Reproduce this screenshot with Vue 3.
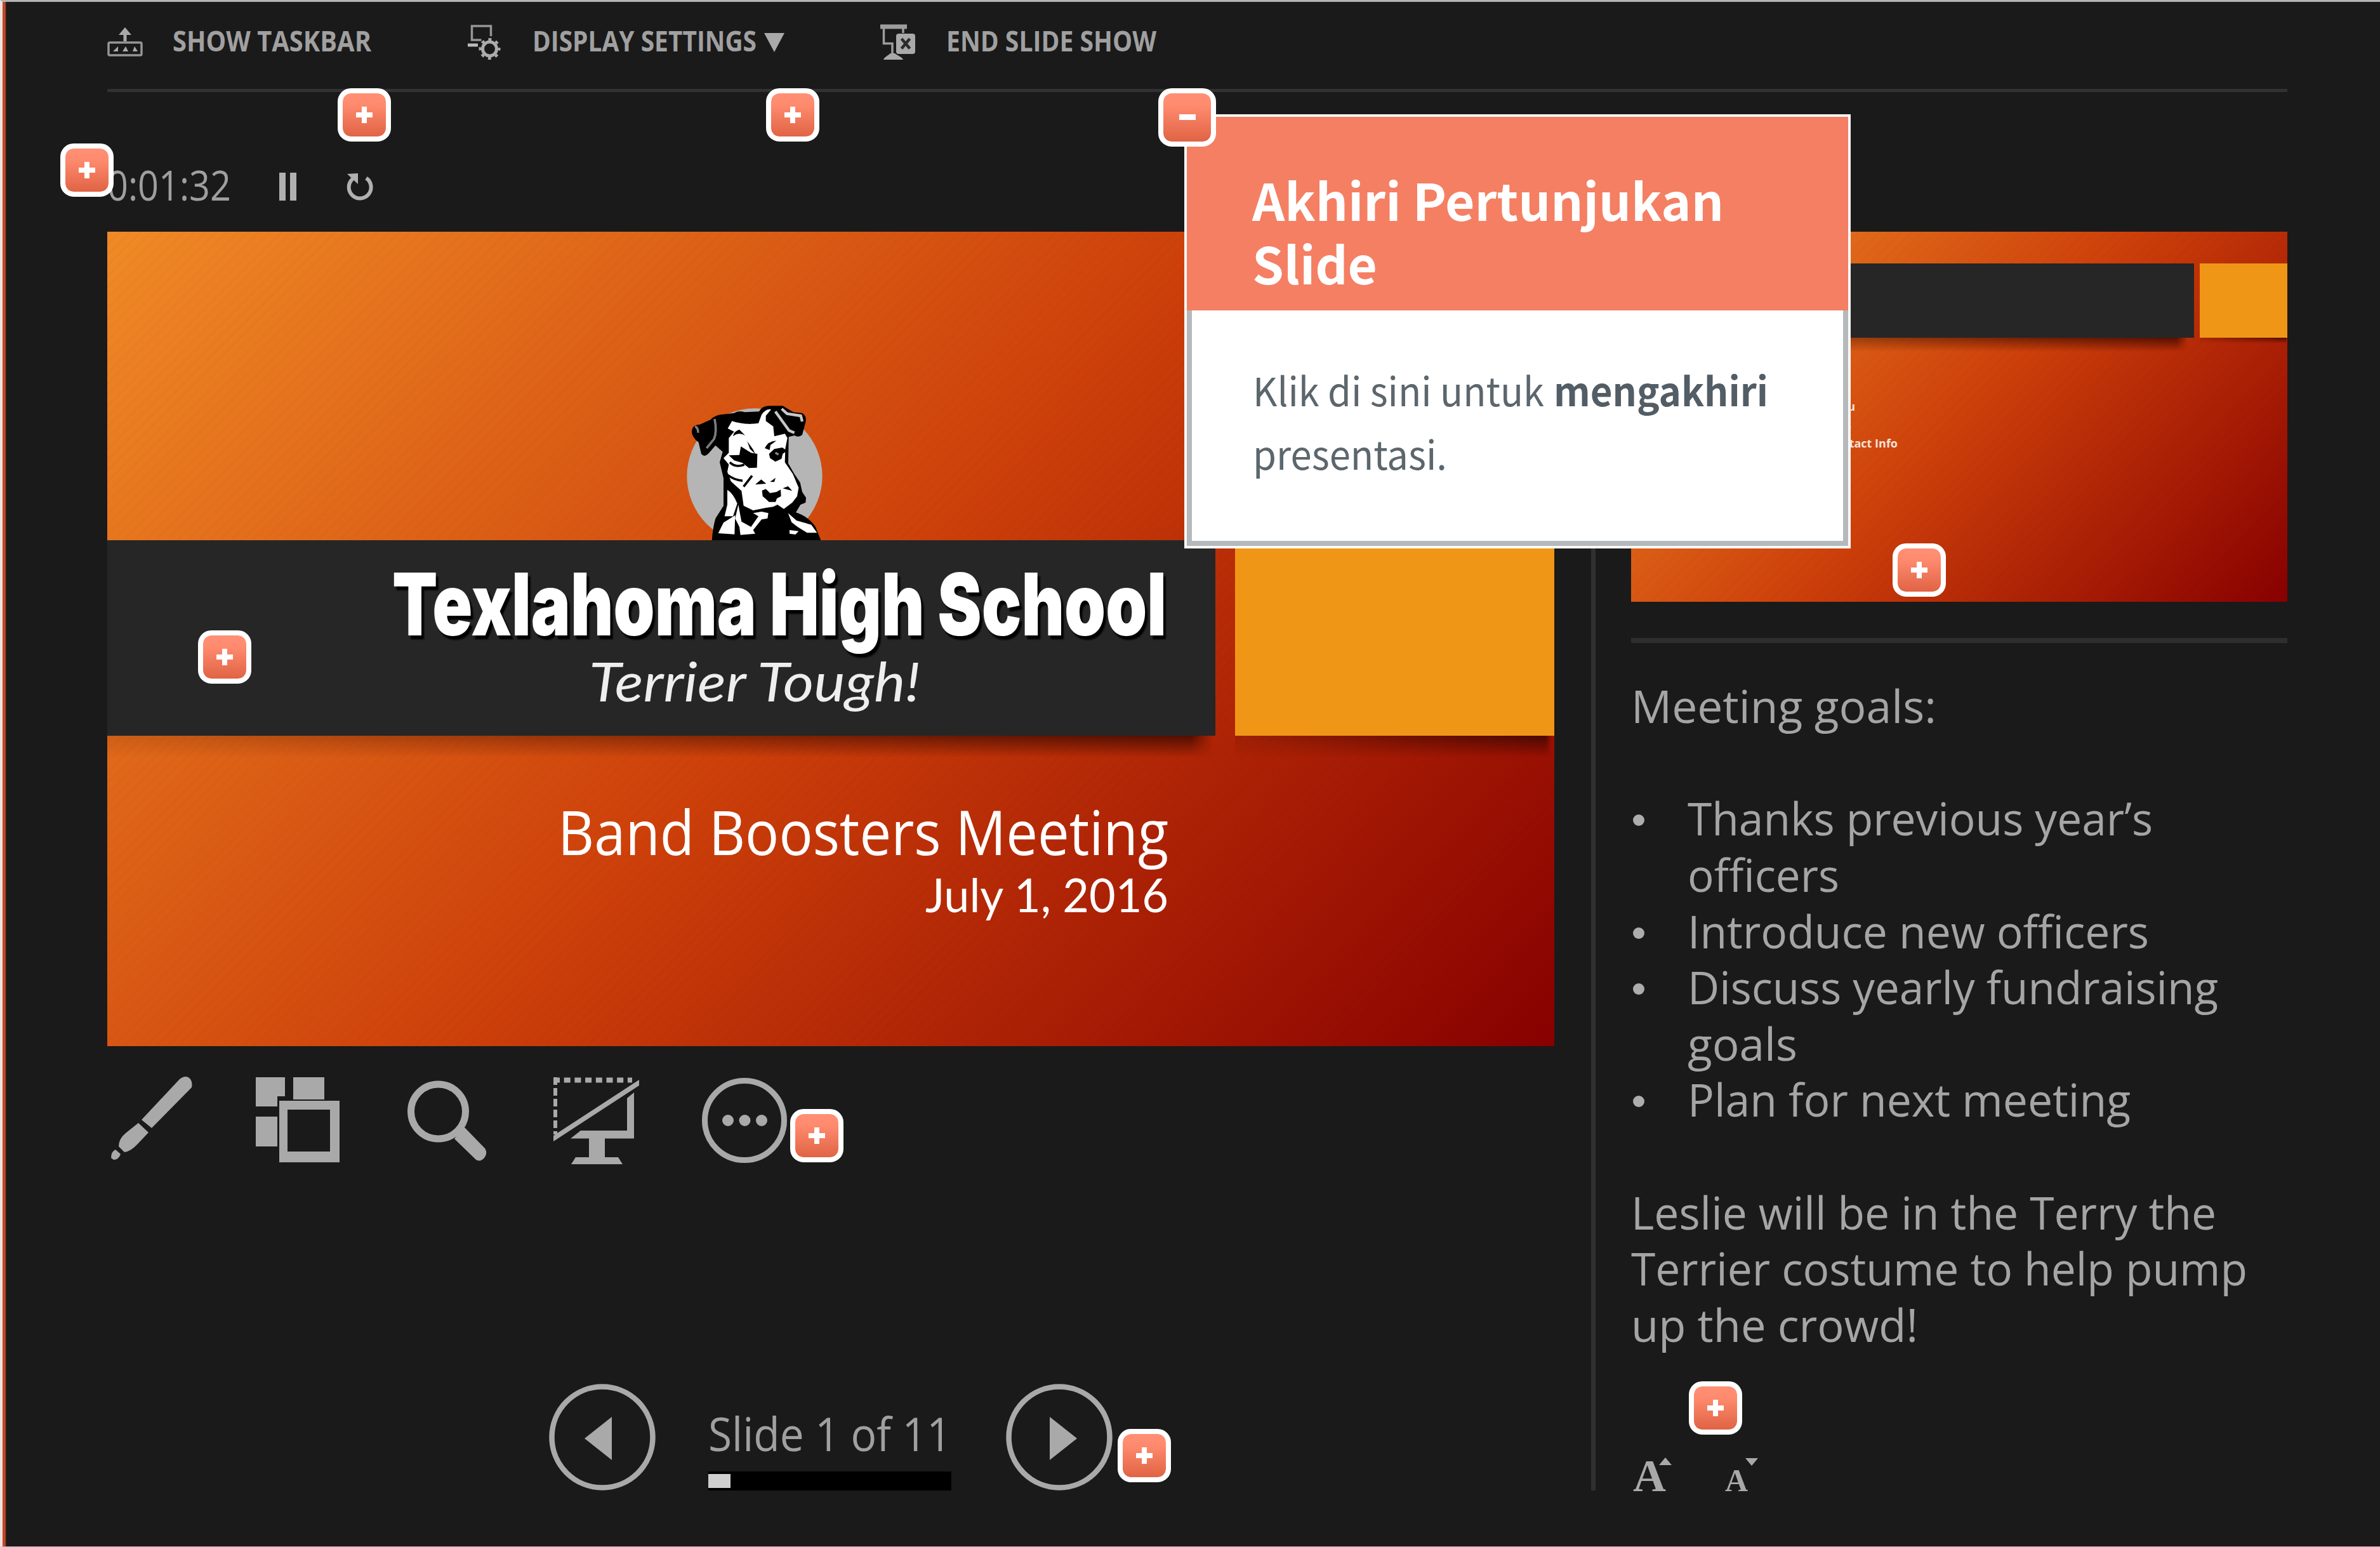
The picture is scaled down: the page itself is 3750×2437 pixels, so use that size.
<script setup>
import { h } from 'vue'

// One line of text set to an exact measure; glyphs scale to fill the width.
const FitLine = ({ text, w, lh, base }) =>
  h('svg', { width: w, height: lh, style: { display: 'block', overflow: 'visible', flex: 'none' } }, [
    h('text', { x: 0, y: base, textLength: w, lengthAdjust: 'spacingAndGlyphs', fill: 'currentColor' }, text),
  ])
FitLine.props = ['text', 'w', 'lh', 'base']

const notes = [
  { text: 'Meeting goals:', w: 481 },
  null,
  { text: 'Thanks previous year’s', w: 733, item: true, bullet: true },
  { text: 'officers', w: 239, item: true },
  { text: 'Introduce new officers', w: 727, item: true, bullet: true },
  { text: 'Discuss yearly fundraising', w: 836, item: true, bullet: true },
  { text: 'goals', w: 173, item: true },
  { text: 'Plan for next meeting', w: 698, item: true, bullet: true },
  null,
  { text: 'Leslie will be in the Terry the', w: 922 },
  { text: 'Terrier costume to help pump', w: 971 },
  { text: 'up the crowd!', w: 452 },
]

const hotspots = [
  { x: 532, y: 139 },
  { x: 1207, y: 139 },
  { x: 95, y: 226 },
  { x: 312, y: 993 },
  { x: 1245, y: 1747 },
  { x: 1761, y: 2251 },
  { x: 2982, y: 856 },
  { x: 2661, y: 2176 },
]
</script>

<template>
  <div class="screen">
    <header class="toolbar">
      <div class="cmd">
        <svg class="cmd-icon first" width="56" height="60" viewBox="168 38 56 60">
          <path d="M196 43l10 12h-7.500v10h-5V55h-7.500z" fill="#a9a9a9" />
          <rect x="170" y="67" width="52" height="20" rx="2" fill="none" stroke="#959595" stroke-width="3.500" />
          <path d="M177 81h8v-8zM192 81h9l-4-8zM208 81h8l-5-8z" fill="#a9a9a9" />
        </svg>
        <FitLine text="SHOW TASKBAR" :w="313" :lh="60" :base="43" />
      </div>
      <div class="cmd second">
        <svg class="cmd-icon" width="56" height="60" viewBox="735 38 56 60">
          <path d="M773.500 57V41h-30v22h15" fill="none" stroke="#959595" stroke-width="3.500" />
          <path d="M737 71h16" stroke="#bbb" stroke-width="5" />
          <circle cx="771.500" cy="77" r="11" fill="none" stroke="#acacac" stroke-width="5" />
          <circle cx="771.500" cy="77" r="15" fill="none" stroke="#acacac" stroke-width="4" stroke-dasharray="5 6.780" stroke-dashoffset="2.500" />
        </svg>
        <FitLine text="DISPLAY SETTINGS" :w="353" :lh="60" :base="43" />
        <svg class="caret" width="32" height="60" viewBox="0 38 32 60"><path d="M0 52h32L16 82z" fill="#a9a9a9" /></svg>
      </div>
      <div class="cmd third">
        <svg class="cmd-icon" width="56" height="60" viewBox="1386 38 56 60">
          <path d="M1386 38.500h42v7h-42z" fill="#9d9d9d" />
          <path d="M1391.500 45v23.500h13.500V84M1422 45v7" fill="none" stroke="#9d9d9d" stroke-width="3.500" />
          <path d="M1391 94c2-5 7-6 11-10h7c4 4 11 5 13 10z" fill="#a9a9a9" />
          <rect x="1411" y="53" width="30" height="32" rx="4" fill="#a9a9a9" />
          <path d="M1419.500 61l13 15.500M1432.500 61l-13 15.500" stroke="#2b2b2b" stroke-width="4.500" />
        </svg>
        <FitLine text="END SLIDE SHOW" :w="331" :lh="60" :base="43" />
      </div>
    </header>

    <div class="columns">
      <main class="current">
        <div class="timer">
          <FitLine text="0:01:32" :w="195" :lh="80" :base="61" />
          <svg class="pause" width="28" height="44" viewBox="0 0 28 44"><path d="M0 0h10v44H0zM17 0h10v44H17z" fill="#b0b0b0" /></svg>
          <svg class="restart" width="44" height="44" viewBox="0 0 44 44">
            <path d="M32 8.500a17.500 17.500 0 1 1-21 1" fill="none" stroke="#b0b0b0" stroke-width="6" />
            <path d="M2 2l17-1v17z" fill="#b0b0b0" />
          </svg>
        </div>

        <section class="slide main-slide">
          <div class="band-row">
            <div class="band">
              <div class="school">
                <FitLine text="Texlahoma High School" :w="1220" :lh="122" :base="109" />
              </div>
              <div class="motto">
                <FitLine text="Terrier Tough!" :w="522" :lh="90" :base="82" />
              </div>
            </div>
            <div class="accent"></div>
          </div>
          <svg class="mascot" width="300" height="251" viewBox="0 0 900 753">
            <circle cx="447" cy="450" r="320" fill="#b5b5b5" />
            <path d="M150 235Q152 208 188 206L238 184Q262 158 300 158L350 152Q370 138 400 148L468 145Q480 118 520 118H580L630 148 672 152Q694 165 688 195L672 255Q655 270 635 258L608 265 606 390 635 440 662 480 672 525 690 552 688 575 664 585 642 622Q700 640 735 690L760 753H245Q250 690 262 650L300 590 300 460 282 385 296 335 262 305 232 340Q210 365 195 345L182 290Q148 265 150 235Z" fill="#000" />
            <path d="M340 190Q400 210 465 200L480 160Q500 130 525 135L500 165 500 190 535 215 540 262 590 250 602 270 592 320 590 385 628 440 655 505 648 545 625 575 585 605 555 585 535 595 500 600 440 612 395 590 385 520 335 475 318 430 325 395 300 365 325 340 325 270 350 240 320 225Z" fill="#fff" />
            <path d="M325 352L375 350 382 310 430 340 460 345 458 410 420 412 390 388 350 376ZM495 318Q510 285 550 283L522 303 518 327ZM515 345L540 322 578 315 600 330 580 345 574 368 545 382 520 365ZM345 262Q348 238 375 230L402 258Q372 240 345 262ZM412 285L440 325 450 345 425 322ZM482 518L500 511 520 530 550 525 570 514 572 545 552 556 546 572 515 572 500 558 485 545ZM450 490L478 466 502 486ZM520 477L546 458 540 478ZM580 508L605 498 625 520ZM400 195H440L425 204Z" fill="#000" />
            <path d="M330 385Q355 412 398 396M320 445Q350 468 390 472M395 500L435 448" stroke="#000" stroke-width="11" fill="none" />
            <path d="M545 340L560 348" stroke="#888" stroke-width="10" />
            <path d="M318 515Q345 530 365 580L345 640 305 640 318 585ZM275 720L300 670 355 635 352 725ZM370 585L385 665 430 690 465 640 440 625 480 618 512 625 508 650 480 655 440 705 450 722 380 728 375 690 355 650ZM605 625L645 660 715 680 742 718 695 718 650 690 622 668ZM612 705L655 710 640 726 612 722Z" fill="#fff" />
            <path d="M385 600Q430 620 445 612L430 640 400 672 388 640Z" fill="#000" />
            <path d="M258 180Q270 240 255 275L220 318M165 215Q180 220 180 245" stroke="#7c7c7c" stroke-width="11" fill="none" />
            <path d="M545 145L610 235 635 245M575 132L600 155 665 165 672 192" stroke="#c8c8c8" stroke-width="13" fill="none" />
          </svg>
          <div class="subtitle">
            <FitLine class="meeting" text="Band Boosters Meeting" :w="962" :lh="100" :base="78" />
            <FitLine class="date" text="July 1, 2016" :w="383" :lh="90" :base="66" />
          </div>
        </section>

        <div class="tools">
          <svg width="131" height="140" viewBox="175 1695 131 140" fill="#a9a9a9">
            <path d="M223 1764L283 1700Q292 1693 298 1698T302 1713L239 1777ZM218 1769L234 1784 217 1802Q206 1814 196 1815L187 1806Q187 1794 198 1785ZM175 1824Q175 1814 182 1811L190 1818Q187 1827 179 1827Z" />
          </svg>
          <svg class="t-grid" width="132" height="140" viewBox="403 1695 132 140" fill="#a9a9a9">
            <path d="M403 1697h46v30h-12v16h-34zM462 1697h49v35h-49zM403 1759h34v47h-34z" />
            <path fill-rule="evenodd" d="M440 1734h95v97h-95zM453 1748v66h67v-66z" />
          </svg>
          <svg class="t-zoom" width="126" height="140" viewBox="642 1695 126 140">
            <circle cx="690.500" cy="1751" r="43" fill="none" stroke="#a9a9a9" stroke-width="11" />
            <path d="M730 1774L764 1809Q769 1817 763 1824T750 1827L716 1794Z" fill="#a9a9a9" />
          </svg>
          <svg class="t-black" width="136" height="140" viewBox="871 1695 136 140">
            <path d="M872 1701.500h124" stroke="#a9a9a9" stroke-width="8" stroke-dasharray="10 6.700" />
            <path d="M875 1697v90" stroke="#a9a9a9" stroke-width="6" stroke-dasharray="12 5" />
            <path d="M872 1789L1007 1701V1710L872 1798Z" fill="#a9a9a9" />
            <path d="M999 1721V1793.500H899L915 1781H988V1730ZM928 1790h25v33h21l7 11h-81l7-11h21z" fill="#a9a9a9" />
          </svg>
          <svg class="t-more" width="136" height="140" viewBox="1105 1695 136 140">
            <circle cx="1173" cy="1765" r="62.500" fill="none" stroke="#a9a9a9" stroke-width="9" />
            <path d="M1147 1765h0M1173.500 1765h0M1200 1765h0" stroke="#a9a9a9" stroke-width="18" stroke-linecap="round" />
          </svg>
        </div>

        <nav class="pager">
          <svg width="168" height="170" viewBox="0 0 168 170">
            <circle cx="84" cy="85" r="79.500" fill="none" stroke="#a9a9a9" stroke-width="8.500" />
            <path d="M56 87L99 53V121Z" fill="#a9a9a9" />
          </svg>
          <div class="progress">
            <FitLine text="Slide 1 of 11" :w="383" :lh="100" :base="68" />
            <div class="track"><div class="fill"></div></div>
          </div>
          <svg width="168" height="170" viewBox="0 0 168 170">
            <circle cx="84" cy="85" r="79.500" fill="none" stroke="#a9a9a9" stroke-width="8.500" />
            <path d="M112 87L69 53V121Z" fill="#a9a9a9" />
          </svg>
        </nav>
      </main>

      <div class="divider"></div>

      <aside class="side">
        <section class="slide next-slide">
          <div class="band-row">
            <div class="band"></div>
            <div class="accent"></div>
          </div>
          <div class="agenda">
            <p class="l1">menu</p>
            <p class="l2">Goals</p>
            <p class="l3">Contact Info</p>
          </div>
        </section>
        <div class="rule"></div>
        <div class="notes">
          <div v-for="(n, i) in notes" :key="i" class="note" :class="{ item: n && n.item }">
            <span v-if="n && n.bullet" class="bullet"></span>
            <FitLine v-if="n" :text="n.text" :w="n.w" :lh="88" :base="69" />
          </div>
        </div>
        <div class="sizes">
          <span class="a big">A</span>
          <svg class="up" width="20" height="12" viewBox="0 0 20 12"><path d="M0 12L10 0 20 12Z" fill="#a9a9a9" /></svg>
          <span class="a small">A</span>
          <svg class="down" width="20" height="12" viewBox="0 0 20 12"><path d="M0 0h20L10 12Z" fill="#a9a9a9" /></svg>
        </div>
      </aside>
    </div>

    <div class="tooltip">
      <div class="tip-head">
        <FitLine text="Akhiri Pertunjukan" :w="743" :lh="100" :base="75" />
        <FitLine text="Slide" :w="197" :lh="100" :base="75" />
      </div>
      <div class="tip-body">
        <div class="tip-line">
          <FitLine text="Klik di sini untuk" :w="459" :lh="100" :base="71" />
          <FitLine class="strong" text="mengakhiri" :w="338" :lh="100" :base="71" />
        </div>
        <FitLine text="presentasi." :w="306" :lh="100" :base="71" />
      </div>
    </div>

    <div v-for="(s, i) in hotspots" :key="i" class="hotspot" :style="{ left: s.x + 'px', top: s.y + 'px' }">
      <svg width="30" height="30" viewBox="0 0 30 30"><path d="M11 2h8v9h9v8H19v9h-8V19H2v-8h9z" fill="#fff" /></svg>
    </div>
    <div class="hotspot open">
      <svg width="30" height="10" viewBox="0 0 30 10"><path d="M2 0h26v9H2z" fill="#fff" /></svg>
    </div>
  </div>
</template>

<style>
body {
  margin: 0;
  background: #1a1a1a;
}
</style>

<style scoped>
.screen {
  position: relative;
  box-sizing: border-box;
  width: 3750px;
  height: 2437px;
  overflow: hidden;
  border-top: 3px solid #b4b4b4;
  border-left: 4px solid #f0e4e0;
  border-bottom: 1px solid #b4b4b4;
  background: linear-gradient(to right, #c2472c 4px, #1a1a1a 6px);
  padding: 0 146px 0 165px;
  font-family: "Open Sans", "Noto Sans", sans-serif;
  color: #a9a9a9;
}
.toolbar {
  display: flex;
  align-items: flex-start;
  box-sizing: border-box;
  height: 142px;
  padding-top: 35px;
  border-bottom: 5px solid #323232;
  font-size: 45px;
  font-weight: 700;
  color: #a0a0a0;
}
.cmd {
  display: flex;
}
.cmd-icon {
  margin-right: 48px;
}
.cmd-icon.first {
  margin-right: 47px;
}
.second {
  margin-left: 150px;
}
.caret {
  margin-left: 12px;
}
.third {
  margin-left: 151px;
}
.columns {
  display: flex;
}
.current {
  width: 2280px;
}
.timer {
  display: flex;
  align-items: flex-start;
  box-sizing: border-box;
  height: 220px;
  padding-top: 110px;
  font-size: 65px;
  color: #9f9f9f;
}
.pause {
  margin: 17px 0 0 76px;
}
.restart {
  margin: 17px 0 0 77px;
}
.slide {
  position: relative;
  overflow: hidden;
  background:
    repeating-linear-gradient(135deg, rgba(60, 0, 0, 0.015) 0 4px, transparent 4px 12px),
    linear-gradient(133deg, #f08a26 0%, #cd400a 50%, #880000 100%);
}
.main-slide {
  height: 1283px;
}
.band-row {
  display: flex;
}
.band,
.accent {
  position: relative;
}
.band {
  background: #262626;
}
.accent {
  flex: 1;
  background: #f09616;
}
.band::after,
.accent::after {
  content: "";
  position: absolute;
  left: 0;
  right: 4px;
  top: 100%;
  height: 34px;
  background: linear-gradient(to bottom, rgba(40, 5, 0, 0.7), rgba(40, 5, 0, 0));
  -webkit-mask-image: linear-gradient(to right, rgba(0, 0, 0, 0.15), #000 98%, transparent);
  mask-image: linear-gradient(to right, rgba(0, 0, 0, 0.15), #000 98%, transparent);
}
.main-slide .band-row {
  margin-top: 486px;
  height: 308px;
}
.main-slide .band {
  width: 1746px;
  margin-right: 31px;
}
.school {
  padding: 41px 0 0 449px;
  font-family: "Inter", sans-serif;
  font-weight: 900;
  font-size: 136px;
  color: #fff;
  -webkit-text-stroke: 5px #fff;
  filter: drop-shadow(4px 6px 1px #000);
}
.motto {
  padding: 9px 0 0 759px;
  font-family: "Lato", sans-serif;
  font-style: italic;
  font-weight: 400;
  font-size: 86px;
  color: #eee;
  -webkit-text-stroke: 2px #eee;
}
.mascot {
  position: absolute;
  left: 871px;
  top: 235px;
}
.subtitle {
  display: flex;
  flex-direction: column;
  align-items: flex-end;
  padding: 110px 608px 0 0;
  color: #fff;
}
.meeting {
  font-size: 97px;
  -webkit-text-stroke: 1.5px #fff;
}
.date {
  font-family: "Lato", sans-serif;
  font-size: 73px;
  margin-top: 2px;
  -webkit-text-stroke: 1.5px #fff;
}
.tools {
  display: flex;
  padding: 47px 0 0 6px;
}
.t-grid {
  margin-left: 97px;
}
.t-zoom {
  margin-left: 107px;
}
.t-black {
  margin-left: 103px;
}
.t-more {
  margin-left: 98px;
}
.pager {
  display: flex;
  margin-top: 344px;
  padding-left: 696px;
}
.progress {
  width: 383px;
  margin: 0 86px 0 83px;
  padding-top: 39px;
  font-size: 73px;
  color: #a0a0a0;
}
.track {
  box-sizing: border-box;
  height: 30px;
  padding: 4px 0;
  background: #000;
}
.fill {
  width: 35px;
  height: 22px;
  background: #cfcfcf;
}
.divider {
  width: 7px;
  height: 1983px;
  margin: 220px 0 0 58px;
  background: #303030;
}
.side {
  width: 1034px;
  margin-left: 56px;
  padding-top: 220px;
}
.next-slide {
  height: 583px;
}
.next-slide .band-row {
  margin-top: 50px;
  height: 117px;
}
.next-slide .band {
  width: 887px;
  margin-right: 9px;
}
.next-slide .band::after {
  right: 10px;
  height: 22px;
}
.next-slide .accent::after {
  right: 0;
  height: 9px;
}
.agenda {
  width: 420px;
  padding-top: 94px;
  font-weight: 700;
  font-size: 18px;
  line-height: 29px;
  color: #f6e4dc;
  text-align: right;
}
.agenda p {
  margin: 0;
}
.l1 {
  padding-right: 67px;
}
.l2 {
  padding-right: 73px;
}
.rule {
  height: 8px;
  margin-top: 57px;
  background: #2e2e2e;
}
.notes {
  margin-top: 57px;
  font-size: 72px;
  color: #a5a5a5;
}
.note {
  display: flex;
  height: 88.640px;
}
.note.item {
  box-sizing: border-box;
  padding-left: 89px;
  position: relative;
}
.bullet {
  position: absolute;
  left: 3px;
  top: 36px;
  width: 18px;
  height: 18px;
  border-radius: 50%;
  background: #adadad;
}
.sizes {
  display: flex;
  align-items: flex-start;
  margin-top: 162px;
  font-family: "Liberation Serif", serif;
  font-weight: 700;
  height: 54px;
}
.a {
  line-height: 58px;
}
.big {
  width: 52px;
  font-size: 72px;
  margin-left: 3px;
}
.small {
  width: 38px;
  font-size: 50px;
  margin: 7px 0 0 84px;
}
.up {
  margin-left: -11px;
}
.down {
  margin: 1px 0 0 -6px;
}
.tooltip {
  position: absolute;
  left: 1862px;
  top: 177px;
  box-sizing: border-box;
  width: 1050px;
  height: 684px;
  border: 4px solid #fafafa;
  background: #fff;
  font-family: "Noto Sans CJK SC", sans-serif;
}
.tip-head {
  box-sizing: border-box;
  height: 305px;
  padding: 89px 0 0 103px;
  background: #f47f63;
  font-size: 80px;
  font-weight: 700;
  color: #fff;
  -webkit-text-stroke: 1px #fff;
}
.tip-body {
  box-sizing: border-box;
  height: 371px;
  padding: 80px 0 0 96px;
  border: 8px solid #b5b9bc;
  border-top: 0;
  font-size: 62px;
  color: #5c666d;
}
.tip-line {
  display: flex;
  gap: 15px;
}
.strong {
  font-weight: 700;
  color: #525d65;
}
.hotspot {
  position: absolute;
  display: flex;
  align-items: center;
  justify-content: center;
  box-sizing: border-box;
  width: 84px;
  height: 84px;
  margin: -3px 0 0 -4px;
  border: 8px solid #fff;
  border-radius: 21px;
  background: linear-gradient(to bottom, #ff8f73 0%, #ff8b6f 25%, #e06344 100%) padding-box, #fff;
}
.hotspot.open {
  left: 1825px;
  top: 139px;
  width: 91px;
  height: 92px;
}
</style>
